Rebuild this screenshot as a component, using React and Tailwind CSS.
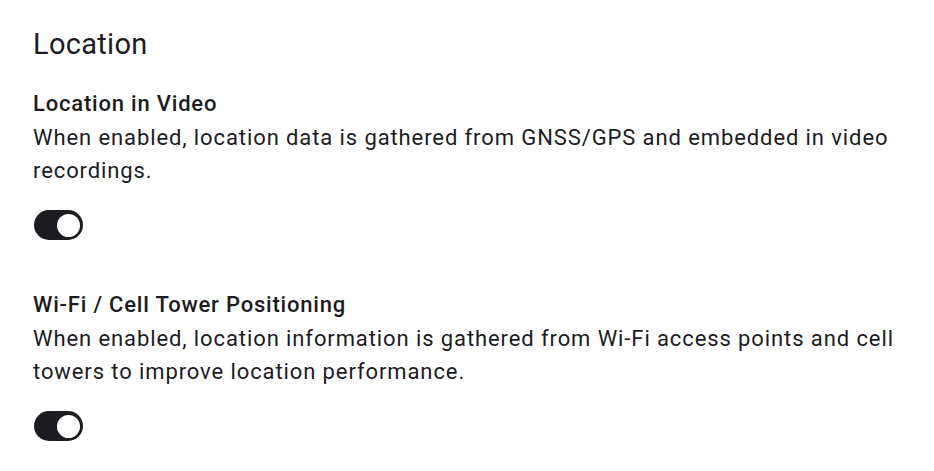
import { useState } from "react"

const Toggle = ({ on, onChange }) => {
  return (
    <button
      onClick={() => onChange(!on)}
      className={`w-[49px] h-[30px] rounded-full flex items-center px-[3px] ${on ? "bg-[#1c1b1f] justify-end" : "bg-[#e6e0e9] justify-start border-2 border-[#79747e]"}`}
    >
      <span className={`block rounded-full bg-white ${on ? "w-[23px] h-[23px]" : "w-[16px] h-[16px] bg-[#79747e]"}`} />
    </button>
  )
}

const Setting = ({ title, desc, on, onChange, className }) => {
  return (
    <div className={className}>
      <h2 className="text-[22px] leading-[28px] font-medium tracking-[0.8px]">{title}</h2>
      <p className="text-[22px] leading-[33px] tracking-[0.9px] mt-[3px]">{desc}</p>
      <div className="mt-[23px] pl-[1px]">
        <Toggle on={on} onChange={onChange} />
      </div>
    </div>
  )
}

export default function App() {
  const [video, setVideo] = useState(true)
  const [wifi, setWifi] = useState(true)

  return (
    <div className="min-h-screen bg-white text-[#1c1b1f] px-[33px] pt-[26px]" style={{ fontFamily: "Roboto, sans-serif" }}>
      <h1 className="text-[29px] leading-[36px] font-normal tracking-[0.3px]">Location</h1>
      <Setting
        className="mt-[28px]"
        title="Location in Video"
        desc="When enabled, location data is gathered from GNSS/GPS and embedded in video recordings."
        on={video}
        onChange={setVideo}
      />
      <Setting
        className="mt-[51px]"
        title="Wi-Fi / Cell Tower Positioning"
        desc="When enabled, location information is gathered from Wi-Fi access points and cell towers to improve location performance."
        on={wifi}
        onChange={setWifi}
      />
    </div>
  )
}
